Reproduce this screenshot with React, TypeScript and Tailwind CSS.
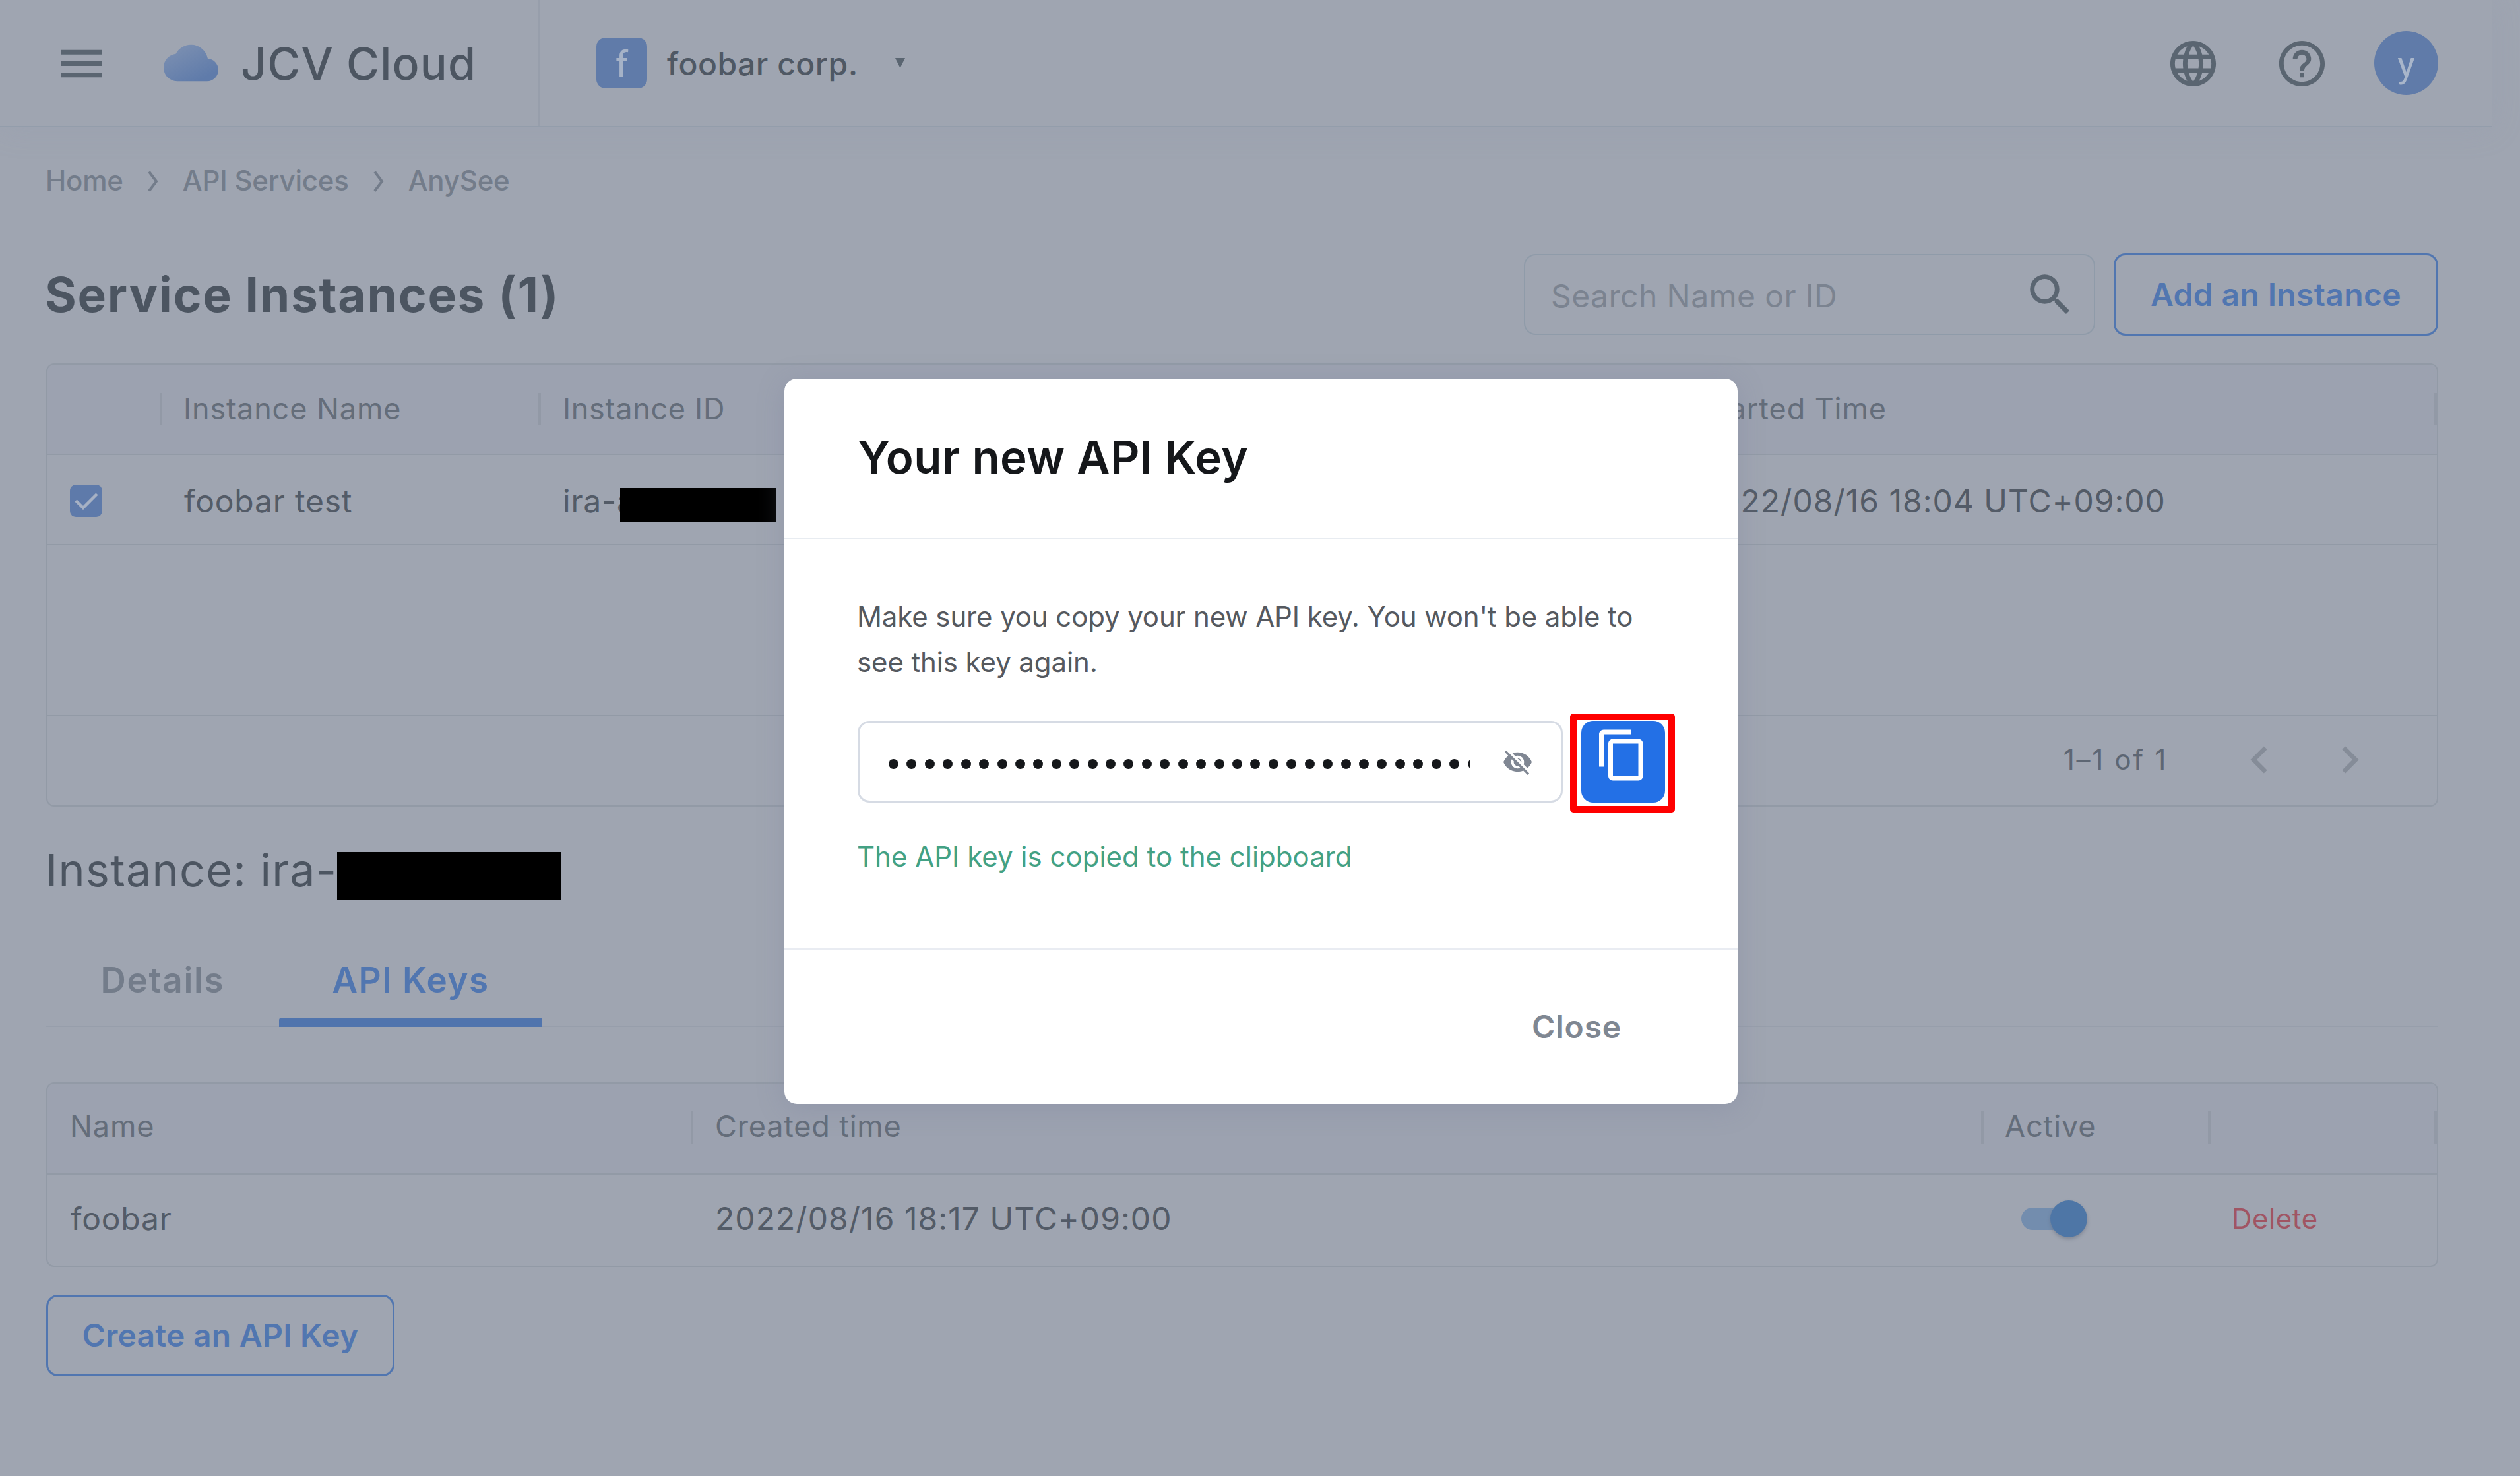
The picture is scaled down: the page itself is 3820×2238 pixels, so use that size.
import {
  MdChevronLeft,
  MdChevronRight,
  MdContentCopy,
  MdHelpOutline,
  MdLanguage,
  MdMenu,
  MdSearch,
  MdVisibilityOff,
} from 'react-icons/md';

const breadcrumbs = ['Home', 'API Services', 'AnySee'];

// number of masked characters in the key field, the last one is cut off
const maskedKey = Array.from({ length: 33 });

function CloudLogo() {
  return (
    <svg viewBox="0 0 24 24" className="w-[83px] h-[83px]">
      <defs>
        <linearGradient id="cloud" x1="0.15" y1="0.1" x2="0.75" y2="0.9">
          <stop offset="0" stopColor="#7b8fb1" />
          <stop offset="1" stopColor="#5f7baa" />
        </linearGradient>
      </defs>
      <path
        fill="url(#cloud)"
        d="M19.35 10.04A7.49 7.49 0 0 0 12 4C9.11 4 6.6 5.64 5.35 8.04A5.994 5.994 0 0 0 0 14c0 3.31 2.69 6 6 6h13c2.76 0 5-2.24 5-5 0-2.64-2.05-4.78-4.65-4.96z"
      />
    </svg>
  );
}

function Crumb() {
  return (
    <svg viewBox="0 0 16 32" className="w-[16px] h-[32px] mt-[3px]" fill="none" stroke="#737c8a" strokeWidth="4">
      <path d="M2 1.5 13 16 2 30.5" />
    </svg>
  );
}

function Separator() {
  return <div className="w-1 h-[49px] bg-[#9299a6]" />;
}

function Header() {
  return (
    <header className="flex w-[3778px] h-[193px] border-b-2 border-[#939dab] shadow-[0_0_44px_rgba(140,148,172,0.22)]">
      <div className="flex items-center w-[818px] pl-[82px] border-r-2 border-[#979eab]">
        <MdMenu className="w-[83px] h-[83px] mt-px text-[#5a6571]" />
        <div className="ml-[83px]">
          <CloudLogo />
        </div>
        <span className="ml-[34px] text-[68px] font-medium tracking-[1.2px] text-[#4c5561]">JCV Cloud</span>
      </div>
      <div className="flex items-center ml-[86px]">
        <div className="flex items-center justify-center w-[77px] h-[77px] pt-[5px] rounded-[14px] bg-[#607ba9] font-[Roboto] text-[56px] leading-none text-[#a5b2c7]">
          f
        </div>
        <span className="ml-[30px] pt-0.5 text-[48px] font-medium tracking-[0.5px] text-[#4f5864]">foobar corp.</span>
        <svg viewBox="0 0 15 15" className="w-[15px] h-[15px] ml-[56px]" fill="#5a6571">
          <path d="M0 0h15L7.500 15z" />
        </svg>
      </div>
      <div className="flex items-center ml-auto pr-[82px]">
        <MdLanguage className="w-[83px] h-[83px] mt-px text-[#5a6571]" />
        <MdHelpOutline className="w-[83px] h-[83px] mt-px ml-[82px] text-[#5a6571]" />
        <div className="flex items-center justify-center w-[97px] h-[97px] pt-[5px] ml-[68px] rounded-full bg-[#607ba9] font-[Roboto] text-[56px] leading-none text-[#a9b6ca]">
          y
        </div>
      </div>
    </header>
  );
}

function InstanceTable() {
  return (
    <section className="mt-[43px] h-[672px] border-2 border-[#929aa6] rounded-[12px]">
      <div className="flex items-center h-[137px] border-b-2 border-[#929aa6] rounded-t-[10px] bg-[#9ca2b0] text-[45px] tracking-[0.9px] text-[#646d7a]">
        <div className="w-[170px]" />
        <Separator />
        <div className="w-[570px] pl-[32px] pb-[2px]">Instance Name</div>
        <Separator />
        <div className="w-[1720px] pl-[33px] pb-[2px] tracking-[0.7px]">Instance ID</div>
        <Separator />
        <div className="flex-1 pl-[32px] pb-[2px]">Started Time</div>
        <Separator />
      </div>
      <div className="flex items-center h-[137px] pt-[4px] border-b-2 border-[#929aa6] text-[48px] tracking-[0.8px] text-[#535b67]">
        <div className="w-[172px] pl-[34px]">
          <div className="flex items-center justify-center w-[49px] h-[49px] rounded-[9px] bg-[#5e7aaa]">
            <svg viewBox="0 0 36 26" className="w-[36px] h-[26px]" fill="none" stroke="#a6b1c4" strokeWidth="4.500">
              <path d="M2 12 13 23 34 2" />
            </svg>
          </div>
        </div>
        <div className="w-[574px] pl-[35px]">foobar test</div>
        <div className="flex items-center w-[1724px] pl-[35px]">
          <span>ira-a</span>
          <span className="relative w-[236px] h-[52px] mt-[12px] -ml-[23px] bg-black" />
        </div>
        <div className="flex-1 pl-[35px] tracking-[1px]">2022/08/16 18:04 UTC+09:00</div>
      </div>
      <div className="h-[259px] border-b-2 border-[#929aa6]" />
      <div className="flex items-center justify-end h-[135px] pb-[4px] pr-[91px] text-[#5d6673]">
        <span className="text-[42px] tracking-[2.700px]">1–1 of 1</span>
        <MdChevronLeft className="w-[82px] h-[82px] ml-[98px] text-[#858c98]" />
        <MdChevronRight className="w-[82px] h-[82px] ml-[55px] text-[#858c98]" />
      </div>
    </section>
  );
}

function KeyTable() {
  return (
    <section className="mt-[84px] h-[280px] border-2 border-[#929aa6] rounded-[12px]">
      <div className="flex items-center h-[138px] pb-[3px] border-b-2 border-[#929aa6] rounded-t-[10px] bg-[#9ca2b0] text-[45px] tracking-[0.9px] text-[#646d7a]">
        <div className="w-[975px] pl-[34px] pb-[4px]">Name</div>
        <Separator />
        <div className="w-[1952px] pl-[33px] pb-[4px] tracking-[0.8px]">Created time</div>
        <Separator />
        <div className="w-[340px] pl-[32px] pb-[4px]">Active</div>
        <Separator />
        <div className="flex-1" />
        <Separator />
      </div>
      <div className="flex items-center h-[138px] pb-[5px] text-[48px] text-[#535b67]">
        <div className="w-[977px] pl-[35px] tracking-[0.8px]">foobar</div>
        <div className="w-[1956px] pl-[35px] tracking-[1.050px]">2022/08/16 18:17 UTC+09:00</div>
        <div className="w-[344px] pl-[59px]">
          <div className="relative flex items-center w-[100px] h-[56px]">
            <div className="w-[83px] h-[34px] rounded-full bg-[#738dae]" />
            <div className="absolute right-0 w-[56px] h-[56px] rounded-full bg-[#4e76a6] shadow-[0_3px_5px_rgba(90,98,115,0.4)]" />
          </div>
        </div>
        <div className="pl-[34px] text-[42px] tracking-[0.6px] text-[#a05563]">Delete</div>
      </div>
    </section>
  );
}

function KeyModal() {
  return (
    <div className="absolute left-[1189px] top-[574px] w-[1445px] h-[1100px] flex flex-col rounded-[19px] bg-white shadow-[0_6px_40px_rgba(120,128,155,0.32)]">
      <div className="flex items-center h-[244px] pl-[111px] pb-[1px] border-b-[3px] border-[#e8ecf1]">
        <h2 className="text-[69px] font-semibold tracking-[0.4px] text-[#15171a]">Your new API Key</h2>
      </div>
      <div className="flex-1 pl-[111px] pt-[82px]">
        <p className="w-[1240px] -ml-px text-[42px] leading-[69px] tracking-[-0.12px] text-[#55595f]">
          Make sure you copy your new API key. You won't be able to
          <br />
          see this key again.
        </p>
        <div className="flex mt-[55px]">
          <div className="flex items-center w-[1069px] h-[124px] pl-[44px] border-[3px] border-[#d6dbe4] rounded-[18px]">
            <div className="flex w-[881px] pt-[7px] gap-[12.43px] overflow-hidden">
              {maskedKey.map((_, i) => (
                <span key={i} className="shrink-0 w-[15px] h-[15px] rounded-full bg-[#15171a]" />
              ))}
            </div>
            <MdVisibilityOff className="w-[47px] h-[47px] ml-[49px] text-[#808793]" />
          </div>
          <div className="relative flex justify-center w-[127px] h-[124px] ml-[28px] pt-[10px] pr-[4px] rounded-[18px] bg-[#2370e6]">
            <MdContentCopy className="w-[84px] h-[84px] text-white" />
            <div className="absolute -left-[17px] -top-[11px] w-[159px] h-[150px] border-[10px] border-[#ff0000] rounded-[5px]" />
          </div>
        </div>
        <p className="mt-[48px] -ml-px text-[42px] leading-[68px] text-[#43a184]">The API key is copied to the clipboard</p>
      </div>
      <div className="flex items-center justify-end h-[237px] pr-[176px] border-t-[3px] border-[#e9ecf2]">
        <button className="text-[48px] font-semibold tracking-[0.8px] text-[#7f8792]">Close</button>
      </div>
    </div>
  );
}

export default function App() {
  return (
    <div className="relative w-[3820px] h-[2238px] overflow-hidden bg-[#9fa5b1] font-[Inter,sans-serif]">
      <Header />
      <main className="pl-[70px] pr-[124px]">
        <nav className="flex items-center h-[161px] -ml-px text-[42px] font-medium text-[#737c8a]">
          {breadcrumbs.map((name, i) => (
            <div key={name} className="flex items-center">
              {i > 0 && (
                <div className="mx-[37px]">
                  <Crumb />
                </div>
              )}
              <span className="tracking-[-0.2px]">{name}</span>
            </div>
          ))}
        </nav>

        <div className="flex items-center h-[123px] mt-[31px]">
          <h1 className="flex-1 -ml-0.5 text-[73px] font-bold tracking-[1.750px] text-[#4c5561]">Service Instances (1)</h1>
          <div className="flex items-center justify-between w-[866px] h-[123px] pl-[39px] pr-[25px] border-2 border-[#8f9ba9] rounded-[18px]">
            <span className="pt-[5px] text-[48px] tracking-[0.4px] text-[#7b8390]">Search Name or ID</span>
            <MdSearch className="w-[82px] h-[82px] text-[#5a6571]" />
          </div>
          <button className="w-[492px] h-[125px] ml-[28px] border-[3px] border-[#5176b0] rounded-[18px] text-[48px] font-semibold tracking-[0.35px] text-[#5176b0]">
            Add an Instance
          </button>
        </div>

        <InstanceTable />

        <div className="flex items-center h-[192px] -ml-px text-[68px] tracking-[1.300px] text-[#4c5561]">
          <span>Instance: ira-</span>
          <span className="w-[339px] h-[73px] mt-[19px] bg-black" />
        </div>

        <div className="flex h-[142px] border-b-2 border-[#979eab] text-[53px] font-semibold">
          <div className="flex items-center justify-center w-[353px] pt-[4px] tracking-[1.700px] text-[#737c8a]">Details</div>
          <div className="relative flex items-center justify-center w-[399px] pt-[4px] tracking-[1.4px] text-[#5176b0]">
            API Keys
            <div className="absolute left-0 -bottom-0.5 w-full h-[14px] rounded-t-[4px] bg-[#5074ad]" />
          </div>
        </div>

        <KeyTable />

        <button className="w-[528px] h-[124px] mt-[42px] border-[3px] border-[#5176b0] rounded-[18px] text-[48px] font-semibold tracking-[0.25px] text-[#5176b0]">
          Create an API Key
        </button>
      </main>
      <KeyModal />
    </div>
  );
}
